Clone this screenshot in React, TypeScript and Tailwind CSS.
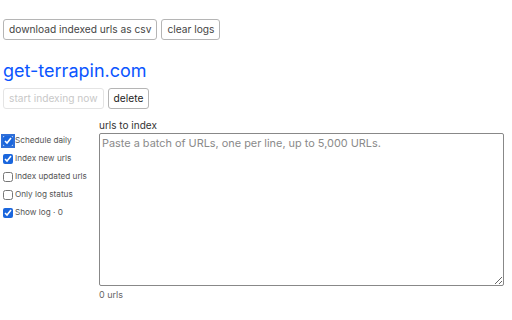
import { useState } from "react";

const opts = [
  { label: "Schedule daily", checked: true, focus: true },
  { label: "Index new urls", checked: true },
  { label: "Index updated urls", checked: false },
  { label: "Only log status", checked: false },
  { label: "Show log · 0", checked: true },
];

export default function App() {
  const [urls, setUrls] = useState("");
  const count = urls.split("\n").filter((l) => l.trim()).length;

  return (
    <div className="h-[320px] w-[512px] bg-white px-[3px] pt-[19px] font-['Inter',sans-serif] text-black">
      <div className="flex gap-1">
        <button className="h-[21px] rounded-[3px] border border-[#b5b5b5] bg-white px-[5px] text-[10.2px] text-[#444]">
          download indexed urls as csv
        </button>
        <button className="h-[21px] rounded-[3px] border border-[#b5b5b5] bg-white px-[5px] text-[10.2px] text-[#444]">
          clear logs
        </button>
      </div>
      <h1 className="mt-[20px] text-[18px] leading-[22px] text-[#0a55ff]">get-terrapin.com</h1>
      <div className="mt-[6px] flex gap-1">
        <button
          disabled
          className="h-[21px] rounded-[3px] border border-[#e4e4e4] bg-white px-[5px] text-[10.2px] text-[#c8c8c8]"
        >
          start indexing now
        </button>
        <button className="h-[21px] rounded-[3px] border border-[#b5b5b5] bg-white px-[5px] text-[10.2px] text-[#222]">
          delete
        </button>
      </div>
      <div className="mt-[10px] flex">
        <div className="flex w-[96px] flex-col gap-[5px] pt-[15px]">
          {opts.map((o) => (
            <label key={o.label} className="flex h-[13px] items-center gap-[2px] text-[8.2px] text-[#555]">
              <input
                type="checkbox"
                defaultChecked={o.checked}
                className={
                  o.focus
                    ? "m-0 h-[10px] w-[10px] accent-[#1a66dd] outline outline-2 outline-[#2f6fd8]"
                    : "m-0 h-[10px] w-[10px] accent-[#1a66dd]"
                }
              />
              {o.label}
            </label>
          ))}
        </div>
        <div className="flex flex-col">
          <span className="text-[10px] leading-[13px] text-[#333]">urls to index</span>
          <textarea
            value={urls}
            onChange={(e) => setUrls(e.target.value)}
            placeholder="Paste a batch of URLs, one per line, up to 5,000 URLs."
            className="mt-[1px] h-[153px] w-[405px] rounded-[2px] border border-[#888] px-[2px] py-[1px] text-[10.9px] placeholder:text-[#8a8a8a]"
          />
          <span className="mt-[2px] text-[9px] text-[#666]">{count} urls</span>
        </div>
      </div>
    </div>
  );
}
